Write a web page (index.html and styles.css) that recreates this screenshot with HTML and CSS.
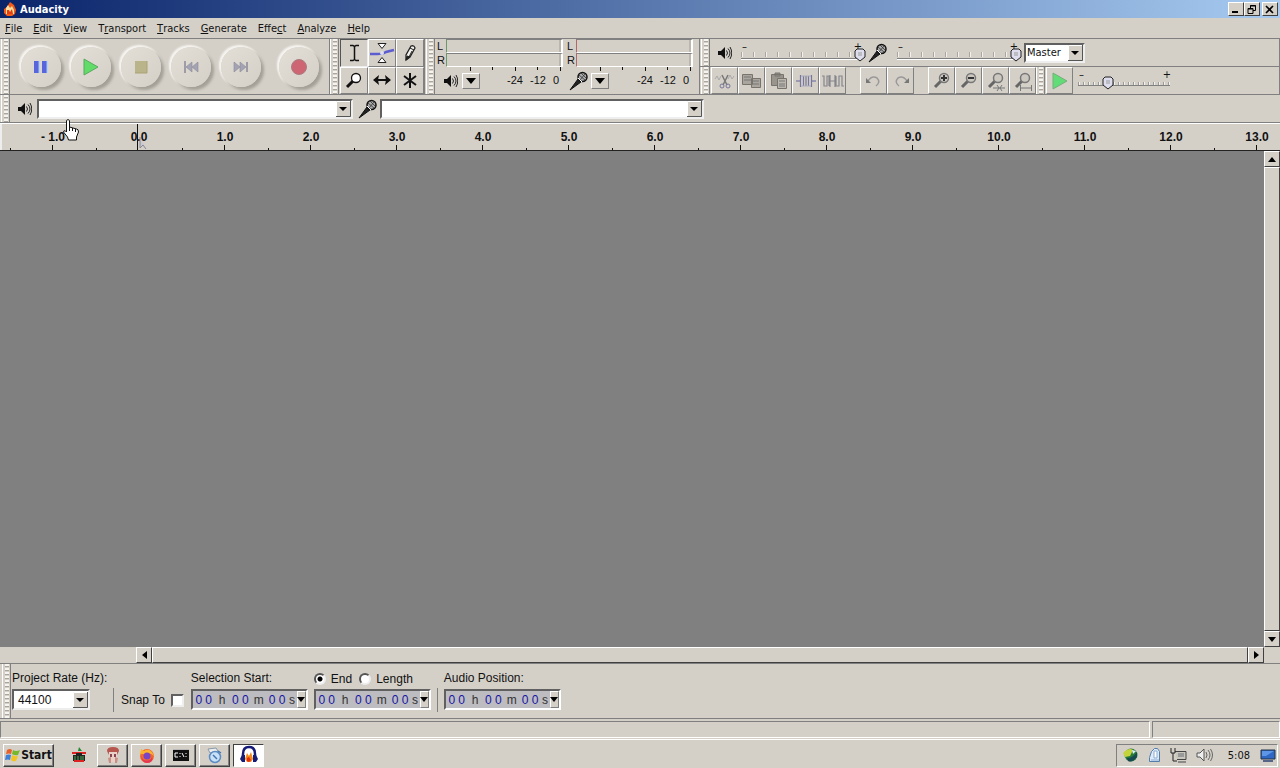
FILE: index.html
```html
<!DOCTYPE html>
<html lang="en">
<head>
<meta charset="utf-8">
<title>Audacity</title>
<link rel="stylesheet" href="styles.css">
</head>
<body>
<svg class="defs" aria-hidden="true">
  <symbol id="speaker" viewBox="0 0 14 14"><path d="M0 5h3l4-4v12L3 9H0z" fill="#111"/><path d="M8.500 4.500q2 2.500 0 5M10 2.500q4 4.500 0 9M12 1q3.500 6 0 12" fill="none" stroke="#222"/></symbol>
  <symbol id="mic" viewBox="0 0 20 20"><path d="M1 19L9 8l3 3z" fill="#222" stroke="#111"/><circle cx="13.500" cy="6" r="4.500" fill="#aaa" stroke="#111" stroke-width="1.500"/><path d="M10 4l6 5M12 2l5 5M11 9l5-6" stroke="#333" stroke-width=".8"/><path d="M9 7l4 4" stroke="#fff"/></symbol>
  <symbol id="lens" viewBox="0 0 20 20"><path d="M3 16l6-6" stroke="#666" stroke-width="3"/><circle cx="12" cy="7" r="4.500" fill="#ccc8c0" stroke="#777" stroke-width="1.500"/></symbol>
  <symbol id="down" viewBox="0 0 10 6"><path d="M0 0h10L5 6z" fill="#000"/></symbol>
</svg>

<header class="titlebar">
  <svg width="12" height="14" viewBox="0 0 12 14"><path d="M6 0l4 3 2 5-1 4-3 2H3l-3-3V7l3-2z" fill="#f25a18"/><path d="M2 6l2-3 2 3 2-2 2 4v4H2z" fill="#ffe0a0"/><path d="M3 8h2l1 2 2-3 1 5H3z" fill="#e33d10"/></svg>
  <h1>Audacity</h1>
  <div class="window-buttons">
    <button aria-label="Minimize"><svg width="10" height="9"><path d="M1 7h6" stroke="#000" stroke-width="2"/></svg></button>
    <button aria-label="Restore"><svg width="10" height="9"><path d="M3.500 3V.5h5v5H6M1 3.500h5v5H1zM3 1h6M1 4h5" fill="none" stroke="#000"/></svg></button>
    <button class="close" aria-label="Close"><svg width="10" height="9"><path d="M1 1l7 7M8 1L1 8" stroke="#000" stroke-width="1.600"/></svg></button>
  </div>
</header>

<nav class="menubar">
  <button><u>F</u>ile</button><button><u>E</u>dit</button><button><u>V</u>iew</button><button>T<u>r</u>ansport</button><button><u>T</u>racks</button><button><u>G</u>enerate</button><button>Effe<u>c</u>t</button><button><u>A</u>nalyze</button><button><u>H</u>elp</button>
</nav>

<section class="dock">
  <div class="dock-row">
    <div class="toolbar transport">
      <i class="grip"></i>
      <div class="round-buttons">
        <button aria-label="Pause"><svg width="16" height="16"><path d="M1 2h5v12H1zM9 2h5v12H9z" fill="#5865dc"/><path d="M6 2v12M14 2v12" stroke="#9cf"/></svg></button>
        <button aria-label="Play"><svg width="16" height="18"><path d="M1 1l14 8-14 8z" fill="#62dc68" stroke="#5aa860"/></svg></button>
        <button aria-label="Stop"><svg width="16" height="16"><path d="M2 2h12v12H2z" fill="#b9b48a"/><path d="M2 14h12V2" fill="none" stroke="#aaa374"/></svg></button>
        <button aria-label="Skip to start"><svg width="16" height="16"><path d="M2 2v12" stroke="#888898" stroke-width="1.500"/><path d="M9 3v10L3 8zM15 3v10L9 8z" fill="#a3a3b4" stroke="#8b8b9a" stroke-width=".6"/></svg></button>
        <button aria-label="Skip to end"><svg width="16" height="16"><path d="M14 3v10" stroke="#888898" stroke-width="1.500"/><path d="M1 3v10l6-5zM7 3v10l6-5z" fill="#a3a3b4" stroke="#8b8b9a" stroke-width=".6"/></svg></button>
        <button class="record" aria-label="Record"><svg width="18" height="18"><circle cx="9" cy="9" r="7.500" fill="#cd6672" stroke="#aa7c80"/></svg></button>
      </div>
    </div>
    <div class="toolbar tools">
      <i class="grip"></i>
      <div class="tool-grid">
        <button class="on" aria-label="Selection tool"><svg width="20" height="22"><path d="M6 3.500h3l1.500 1 1.500-1h3M6 18.500h3l1.500-1 1.500 1h3M10.500 4v14" fill="none" stroke="#111" stroke-width="1.500"/></svg></button>
        <button aria-label="Envelope tool"><svg width="26" height="24"><path d="M1 13h7q6 0 9-2l8-2" fill="none" stroke="#5d5dcf" stroke-width="2.500"/><path d="M9 2.500h8l-4 5zM9 21.500h8l-4-5z" fill="#fff" stroke="#222"/><circle cx="13" cy="12" r="2" fill="#dde"/></svg></button>
        <button aria-label="Draw tool"><svg width="20" height="22"><path d="M6 18v-5l5-9q3-1 4 2l-5 9z" fill="#f4f2ee" stroke="#222" stroke-width="1.300"/><path d="M6 18l1-4 3 1zM10 6l4 2M12 9l-3 6" stroke="#222" fill="#222"/></svg></button>
        <button aria-label="Zoom tool"><svg width="20" height="20"><path d="M3 17l6-6" stroke="#111" stroke-width="3"/><circle cx="12" cy="8" r="4.500" fill="#fff" stroke="#111" stroke-width="1.300"/></svg></button>
        <button aria-label="Time shift tool"><svg width="20" height="16"><path d="M3 8h14" stroke="#111" stroke-width="2"/><path d="M7 3L1 8l6 5-1-5zM13 3l6 5-6 5 1-5z" fill="#111"/></svg></button>
        <button aria-label="Multi tool"><svg width="18" height="18"><path d="M9 2v15M3 5l12 9M15 5L3 14" stroke="#111" stroke-width="2"/></svg></button>
      </div>
    </div>
    <div class="toolbar meters">
      <i class="grip"></i>
      <div class="meter out">
        <div class="bars"><span>L</span><i></i><span>R</span><i></i></div>
        <div class="scale-row"><svg width="14" height="14"><use href="#speaker"/></svg><button aria-label="Output meter menu"><svg width="10" height="6"><use href="#down"/></svg></button><span class="scale"><b>-24</b><b>-12</b><b>0</b></span></div>
      </div>
      <div class="meter in">
        <div class="bars"><span>L</span><i></i><span>R</span><i></i></div>
        <div class="scale-row"><svg width="20" height="20"><use href="#mic"/></svg><button aria-label="Input meter menu"><svg width="10" height="6"><use href="#down"/></svg></button><span class="scale"><b>-24</b><b>-12</b><b>0</b></span></div>
      </div>
    </div>
    <div class="stack">
      <div class="toolbar mixer">
        <i class="grip"></i>
        <svg class="speaker" width="14" height="14"><use href="#speaker"/></svg>
        <label class="slider"><span>–</span><span>+</span><input type="range" value="100" aria-label="Output volume"></label>
        <svg width="20" height="20"><use href="#mic"/></svg>
        <label class="slider"><span>–</span><span>+</span><input type="range" value="100" aria-label="Input volume"></label>
        <select class="combo source" aria-label="Input source"><option>Master</option></select>
      </div>
      <div class="toolbar edit">
        <i class="grip"></i>
        <button aria-label="Cut"><svg width="22" height="20"><path d="M8 4l5 10M14 4l-5 10" stroke="#777" stroke-width="1.500"/><circle cx="8" cy="15" r="2" fill="none" stroke="#779"/><circle cx="14" cy="15" r="2" fill="none" stroke="#779"/><path d="M1 8l2-3 2 4 2-4M14 8l2-4 2 4 2-3" fill="none" stroke="#aaa"/></svg></button>
        <button aria-label="Copy"><svg width="22" height="20"><path d="M1.500 3.500h10v10h-10zM10.500 7.500h9v9h-9z" fill="#aaa69e" stroke="#77746e"/><path d="M3 6h7M3 9h7M12 10h6M12 13h6" stroke="#777"/></svg></button>
        <button aria-label="Paste"><svg width="22" height="20"><path d="M3.500 3.500h12v11h-12zM7 2h5v3H7z" fill="#99958d" stroke="#77746e"/><path d="M9.500 7.500h9v10h-9z" fill="#bbb7ae" stroke="#77746e"/><path d="M11 10h6M11 13h6M11 15h6" stroke="#777"/></svg></button>
        <button aria-label="Trim"><svg width="22" height="20"><path d="M1 10h5M16 10h5" stroke="#88a" stroke-width="1.500"/><path d="M5.500 4v12M8.500 5v10M11 5v10M13.500 5v10M16.500 4v12" stroke="#77779d" stroke-width="1.200"/><path d="M6 5h10M6 15h10" stroke="#aab"/></svg></button>
        <button aria-label="Silence"><svg width="24" height="20"><path d="M1 5h2v10h3V5h2v10M8 10h7M15 5v10h3V5h3v10h2M9 4v12M14 4v12" fill="none" stroke="#85858c" stroke-width="1.200"/></svg></button>
        <i class="space"></i>
        <button aria-label="Undo"><svg width="20" height="18"><path d="M4 9q4-6 9-3 4 4-1 8" fill="none" stroke="#999" stroke-width="1.500"/><path d="M2 6v5h5z" fill="#777"/></svg></button>
        <button aria-label="Redo"><svg width="20" height="18"><path d="M16 9q-4-6-9-3-4 4 1 8" fill="none" stroke="#999" stroke-width="1.500"/><path d="M18 6v5h-5z" fill="#777"/></svg></button>
        <i class="space"></i>
        <button aria-label="Zoom in"><svg width="20" height="20"><use href="#lens"/><path d="M9 7h6M12 4v6" stroke="#333" stroke-width="2"/></svg></button>
        <button aria-label="Zoom out"><svg width="20" height="20"><use href="#lens"/><path d="M9 7h6" stroke="#333" stroke-width="2"/></svg></button>
        <button aria-label="Fit selection"><svg width="20" height="20"><use href="#lens"/><path d="M7 17h12M11 14l2 3-2 3M16 14l-2 3 2 3" fill="none" stroke="#777"/></svg></button>
        <button aria-label="Fit project"><svg width="20" height="20"><use href="#lens"/><path d="M7 17h12M7.500 14v6M18.500 14v6" stroke="#777"/></svg></button>
        <i class="grip"></i>
        <button aria-label="Play at speed"><svg width="18" height="18"><path d="M2 1l14 8-14 8z" fill="#62dc76" stroke="#76ad7c"/></svg></button>
        <label class="slider speed"><span>–</span><span>+</span><input type="range" value="30" aria-label="Playback speed"></label>
      </div>
    </div>
  </div>
  <div class="toolbar devices">
    <i class="grip"></i>
    <svg class="speaker" width="14" height="14"><use href="#speaker"/></svg>
    <select class="combo" aria-label="Output device"><option></option></select>
    <svg width="20" height="20"><use href="#mic"/></svg>
    <select class="combo second" aria-label="Input device"><option></option></select>
    <svg class="hand" width="17" height="24" viewBox="0 0 17 24"><path d="M4.500 14V2.500q1.500-2 3 0V9l7 2q2 0 2 3l-2 5v3h-8l-1-3-4-5q0-2 2-1z" fill="#fff" stroke="#111"/><path d="M7.500 8v5M10.500 10v3M13.500 11v3" stroke="#111"/></svg>
  </div>
</section>

<div class="ruler">
  <span>- 1.0</span><span class="zero">0.0<svg width="9" height="14"><path d="M1 1v11l3-3 3 4" fill="#c8c8d0" stroke="#88889a"/></svg></span><span>1.0</span><span>2.0</span><span>3.0</span><span>4.0</span><span>5.0</span><span>6.0</span><span>7.0</span><span>8.0</span><span>9.0</span><span>10.0</span><span>11.0</span><span>12.0</span><span>13.0</span>
</div>

<main class="workspace">
  <div class="tracks"></div>
  <div class="scroll vertical">
    <button aria-label="Scroll up"><svg width="8" height="5"><path d="M0 5h8L4 0z"/></svg></button>
    <i class="thumb"></i>
    <button aria-label="Scroll down"><svg width="8" height="5"><path d="M0 0h8L4 5z"/></svg></button>
  </div>
  <div class="scroll horizontal">
    <button aria-label="Scroll left"><svg width="5" height="8"><path d="M5 0v8L0 4z"/></svg></button>
    <i class="thumb"></i>
    <button aria-label="Scroll right"><svg width="5" height="8"><path d="M0 0v8l5-4z"/></svg></button>
  </div>
</main>

<section class="selection">
  <i class="grip"></i>
  <div class="field rate"><label for="rate">Project Rate (Hz):</label><select id="rate" class="combo"><option>44100</option></select></div>
  <div class="snap"><label for="snap">Snap To</label><input id="snap" type="checkbox"></div>
  <div class="field"><span>Selection Start:</span>
    <div class="time"><b>0</b><b>0</b><em>h</em><b>0</b><b>0</b><em>m</em><b>0</b><b>0</b><em class="s">s</em><button aria-label="Start format"><svg width="8" height="5" viewBox="0 0 10 6"><use href="#down"/></svg></button></div></div>
  <div class="field end"><div class="radios"><input type="radio" name="mode" id="end" checked><label for="end">End</label><input type="radio" name="mode" id="length"><label for="length">Length</label></div>
    <div class="time"><b>0</b><b>0</b><em>h</em><b>0</b><b>0</b><em>m</em><b>0</b><b>0</b><em class="s">s</em><button aria-label="End format"><svg width="8" height="5" viewBox="0 0 10 6"><use href="#down"/></svg></button></div></div>
  <i class="divider"></i>
  <div class="field"><span>Audio Position:</span>
    <div class="time"><b>0</b><b>0</b><em>h</em><b>0</b><b>0</b><em>m</em><b>0</b><b>0</b><em class="s">s</em><button aria-label="Position format"><svg width="8" height="5" viewBox="0 0 10 6"><use href="#down"/></svg></button></div></div>
</section>

<div class="status"><i></i><i></i></div>

<footer class="taskbar">
  <button class="start"><svg width="16" height="16"><path d="M2 3q3-2 5 0L6 7Q4 6 1 7z" fill="#e8602c"/><path d="M8 3q3 2 7 0l-2 5q-3 1-6-1z" fill="#76b82c"/><path d="M1 8q3-1 5 0l-1 5q-2-1-5 0z" fill="#3f7fd8"/><path d="M7 8q3 2 6 1l-2 5q-3 1-5-1z" fill="#f3c421"/></svg>Start</button>
  <a href="#" class="quick" aria-label="Quick launch"><svg width="16" height="16"><path d="M1 5h14v2H1z" fill="#d22"/><path d="M8 0l3 4H7z" fill="#283"/><path d="M2 8h3V6h6v2h3v6H2z" fill="#222"/><path d="M4 9v4M7 9v4M10 9v4M12 9v4" stroke="#4a5"/><path d="M3 14h10" stroke="#d22" stroke-width="2"/></svg></a>
  <button aria-label="Image viewer"><svg width="18" height="18"><path d="M3 5q0-4 6-4t6 4l-2 4H5z" fill="#b7564e"/><path d="M5 6h8v10H5z" fill="#e8d2c8"/><path d="M6 8h2v3H6zM10 8h2v3h-2z" fill="#8b4350"/><path d="M4 12l3-1v6H5zM14 12l-3-1v6h2z" fill="#c98f86"/></svg></button>
  <button aria-label="Firefox"><svg width="18" height="18"><circle cx="9" cy="10" r="7" fill="#f3682c"/><path d="M2 8l1-5 3 2q4-3 8 1l2 4q-4-4-8-2z" fill="#fdb42c"/><circle cx="9" cy="10" r="3.500" fill="#7a45c5"/><path d="M3 10q2 6 8 4 3-1 3-4 2 7-5 7-5 0-6-7" fill="#e33756"/></svg></button>
  <button aria-label="Command prompt"><svg width="16" height="14"><path d="M0 1h16v12H0z" fill="#111"/><path d="M0 1.500h16" stroke="#bbb"/><path d="M5 5H2v4h3M7 5v1M7 8v1M9 5l2 4M13 8v1M13 5v1" fill="none" stroke="#fff"/></svg></button>
  <button aria-label="Utility"><svg width="18" height="18"><path d="M2 3l8-1 2 3-8 2z" fill="#eee" stroke="#89a"/><circle cx="9" cy="11" r="5.500" fill="#c9e1f6" stroke="#5b8cc4" stroke-width="1.500"/><path d="M7 9l4 4M12 5l3 2" stroke="#4575b0" stroke-width="1.500"/></svg></button>
  <button class="active" aria-label="Audacity"><svg width="20" height="20"><path d="M4 15V9q0-7 6-7t6 7v6" fill="none" stroke="#151b77" stroke-width="2.500"/><path d="M3 10h3v7H3l-2-3zM14 10h3l2 4-2 3h-3z" fill="#151b77"/><path d="M6 14l2-6 2 3 2-4 2 7-2 3H8z" fill="#f28a1b"/><path d="M8 13l2-1 2 3-2 2-2-1z" fill="#e52c17"/></svg></button>
  <div class="tray">
    <svg width="18" height="16"><circle cx="9" cy="8" r="6.500" fill="#287a3b"/><path d="M1 6q6-6 10-3l-3 6-5 1z" fill="#c6d43c"/><path d="M5 11q6 0 10-6v5q-5 6-9 4z" fill="#164a50"/><path d="M10 3l4 1-3 3z" fill="#def"/></svg>
    <svg width="14" height="16"><path d="M3.500 4.500l3-3h3l2 3v10h-10v-4z" fill="#dceafa" stroke="#557daa"/><path d="M6 4h3v7H6zM3 13h8" fill="#fff" stroke="#8cacd0"/></svg>
    <svg width="18" height="16"><path d="M5 4.500h11v8H7M8 15h8" fill="#c9c6be" stroke="#444"/><path d="M8 6h6v4H8z" fill="#999"/><path d="M1 1v5h4V1M3 6v8h4" fill="none" stroke="#222"/></svg>
    <svg width="18" height="16"><path d="M1 6h3l4-4v12l-4-4H1z" fill="#eee" stroke="#555"/><path d="M10 5q2 3 0 6M12 3q4 5 0 10M14.500 2q4 6 0 12" fill="none" stroke="#666"/></svg>
    <time>5:08</time>
    <svg width="16" height="14"><path d="M1 2h14v9H1z" fill="#2f67c4" stroke="#234"/><path d="M2 3h12l-8 5H2z" fill="#5d96e6"/><path d="M3 12h10v2H3z" fill="#568"/></svg>
  </div>
</footer>
</body>
</html>
```

FILE: styles.css
```css
* { box-sizing: border-box; }
body {
  margin: 0; height: 100vh; display: flex; flex-direction: column; overflow: hidden;
  background: #d4d0c8; color: #111;
  font: 11px "DejaVu Sans Condensed", "DejaVu Sans", sans-serif;
}
button, select, input { font: inherit; color: inherit; margin: 0; padding: 0; }
button { background: #d4d0c8; border: 0; display: flex; align-items: center; justify-content: center; }
svg { display: block; flex: none; }
.defs { position: absolute; width: 0; height: 0; }

.titlebar { display: flex; align-items: center; gap: 4px; height: 18px; flex: none; padding: 0 2px 0 4px; background: linear-gradient(90deg, #0a246a, #a6caf0); color: #fff; }
.titlebar h1 { flex: 1; margin: 0; font-size: 11px; }
.window-buttons { display: flex; }
.window-buttons button { width: 16px; height: 14px; border: 1px solid; border-color: #fff #404040 #404040 #fff; }
.window-buttons .close { margin-left: 2px; }

.menubar { display: flex; height: 20px; flex: none; padding-left: 5px; gap: 11px; }
.menubar button { background: none; }

.dock { flex: none; border-top: 1px solid #808080; }
.dock-row { display: flex; height: 56px; }
.toolbar { display: flex; border-right: 1px solid #808080; border-bottom: 1px solid #808080; }
.grip { flex: none; width: 9px; margin-right: 1px; border-left: 1px solid #fff; border-right: 1px solid #808080; background: repeating-linear-gradient(#f6f4f0 0 2px, #aaa69e 2px 3px, #d4d0c8 3px 4px) 2px 0 / 4px 100% no-repeat; align-self: stretch; }

.transport { width: 330px; }
.transport .grip { margin-left: 1px; }
.round-buttons { display: flex; align-items: center; gap: 10px; padding-left: 10px; }
.round-buttons button { width: 40px; height: 40px; border-radius: 50%; background: linear-gradient(135deg, #e3dfd7, #d4d0c8); box-shadow: -2px -2px 2px #f6f4f0, 3px 3px 3px #a39f97, 0 0 0 2px #dfdbd3; }
.round-buttons .record { margin-left: 8px; }

.tools { width: 95px; }
.tool-grid { display: grid; flex: 1; grid-template-columns: repeat(3, 1fr); grid-template-rows: 1fr 1fr; }
.tool-grid button, .edit > button { border: 1px solid; border-color: #fff #808080 #808080 #fff; overflow: hidden; }
.tool-grid .on { border-color: #555 #eee #eee #555; }

.meters { width: 275px; gap: 4px; padding-left: 1px; }
.meters .grip { margin-right: -2px; }
.meter { width: 126px; font-family: "Liberation Sans", Arial, sans-serif; }
.bars { display: grid; grid-template-columns: 9px 1fr; height: 28px; line-height: 14px; }
.bars i { border: solid; border-width: 1px 2px 1px 1px; border-color: #808080 #fff #fff #6a9a6a; box-shadow: inset -2px 0 #bbb7af; }
.in .bars i { border-left-color: #b06a6a; }
.scale-row { display: flex; align-items: center; height: 27px; gap: 4px; padding-left: 7px; background: linear-gradient(#111, #111) 33px 0 / 1px 4px no-repeat, linear-gradient(#111, #111) 55px 0 / 1px 3px no-repeat, linear-gradient(#111, #111) 78px 0 / 1px 4px no-repeat, linear-gradient(#111, #111) 100px 0 / 1px 3px no-repeat, linear-gradient(#111, #111) 123px 0 / 1px 4px no-repeat; }
.in .scale-row { padding-left: 2px; gap: 2px; }
.scale-row button { width: 18px; height: 16px; border: 1px solid; border-color: #fff #808080 #808080 #fff; }
.scale { display: flex; flex: 1; justify-content: flex-end; gap: 7px; padding: 0 4px 2px 0; }
.scale b { font-weight: 400; }

.stack { flex: 1; display: flex; flex-direction: column; min-width: 0; }
.stack .toolbar { flex: 1; align-items: center; min-height: 0; padding-left: 1px; }
.mixer .speaker { margin: 0 9px 0 7px; }
.mixer .slider + svg { margin: 0 9px 0 2px; }
.slider { display: grid; grid-template-columns: 1fr auto; width: 125px; height: 26px; line-height: 14px; font-size: 11px; }
.slider span { grid-area: 1 / 1; padding: 0 1px; }
.slider span + span { grid-column: 2; padding-right: 4px; }
.slider input { grid-area: 1 / 1 / 2 / 3; appearance: none; width: 100%; height: 26px; background: linear-gradient(#808080, #808080) 0 18px / 119px 1px no-repeat, linear-gradient(#fff, #fff) 0 19px / 119px 1px no-repeat, repeating-linear-gradient(90deg, #aaa69e 0 1px, #f4f2ee 1px 2px, transparent 2px 12px) 0 12px / 119px 5px no-repeat; }
.slider input::-webkit-slider-thumb { appearance: none; width: 12px; height: 14px; margin-top: 4px; background: url("data:image/svg+xml,%3Csvg xmlns='http://www.w3.org/2000/svg' width='12' height='14'%3E%3Cpath d='M3 1h6l2 2v6l-5 4-5-4V3z' fill='%23dde' stroke='%23222'/%3E%3Cpath d='M4 5h4M4 7h4' stroke='%23999'/%3E%3C/svg%3E"); }
.slider.speed { width: 93px; margin-left: 5px; }
.slider.speed span + span { padding-right: 0; }
.slider.speed input { background: linear-gradient(#808080, #808080) 0 17px / 92px 1px no-repeat, repeating-linear-gradient(90deg, #999 0 1px, #f4f2ee 1px 2px, transparent 2px 5px) 0 14px / 92px 4px no-repeat; }
.source { width: 61px; height: 20px; margin-left: 2px; }
.edit > button { width: 27px; height: 27px; flex: none; }
.edit .space { width: 14px; }

.combo { appearance: none; border: 2px solid; border-color: #606060 #eee #eee #606060; padding-left: 1px; background: url("data:image/svg+xml,%3Csvg xmlns='http://www.w3.org/2000/svg' width='15' height='16'%3E%3Cpath fill='%23d4d0c8' d='M0 0h15v16H0z'/%3E%3Cpath d='M.5 15V.5H14' fill='none' stroke='%23fff'/%3E%3Cpath d='M0 15.500h14.500V0' fill='none' stroke='%23555'/%3E%3Cpath d='M3 6h8l-4 4z'/%3E%3C/svg%3E") right center no-repeat #fff; border-radius: 0; }
.devices { position: relative; align-items: center; height: 28px; border-right: 0; padding-left: 1px; }
.devices .speaker { margin: 0 5px 0 7px; }
.devices .combo { width: 316px; height: 20px; margin-right: 5px; }
.devices .second { width: 324px; margin-left: 2px; }
.hand { position: absolute; left: 62px; top: 23px; z-index: 2; }

.ruler { display: flex; flex: none; height: 28px; padding-left: 10px; border-top: 1px solid #fff; border-bottom: 1px solid #222; overflow: hidden; font: bold 12px/26px "Liberation Sans", Arial, sans-serif; text-align: center; box-shadow: inset 2px 0 #eee; }
.ruler span { flex: none; width: 86px; background: linear-gradient(#111, #111) 42px 100% / 1px 5px no-repeat, linear-gradient(#111, #111) 0 100% / 1px 2px no-repeat; }
.ruler .zero { position: relative; background: linear-gradient(#111, #111) 41px 0 / 1px 100% no-repeat, linear-gradient(#111, #111) 0 100% / 1px 2px no-repeat; }
.zero svg { position: absolute; left: 43px; top: 12px; }

.workspace { flex: 1; min-height: 0; display: grid; grid-template-columns: 1fr 16px; grid-template-rows: 1fr 16px; }
.tracks { background: #808080; }
.scroll { display: flex; background: #ece9e2; }
.scroll.vertical { flex-direction: column; }
.scroll.horizontal { margin-left: 136px; }
.scroll button, .thumb { border: 1px solid; border-color: #fff #404040 #404040 #fff; background: #d4d0c8; }
.scroll button { flex: none; width: 16px; height: 16px; }
.thumb { flex: 1; }

.selection { display: flex; flex: none; height: 56px; border-top: 1px solid #808080; border-bottom: 1px solid #808080; padding-left: 2px; font: 12px "Liberation Sans", Arial, sans-serif; }
.field { display: grid; grid-template-rows: 16px 21px; row-gap: 2px; padding-top: 7px; align-content: start; }
.rate { width: 101px; white-space: nowrap; }
.rate .combo { width: 78px; height: 21px; padding-left: 4px; }
.snap { display: flex; align-items: center; gap: 6px; height: 24px; margin: 24px 7px 0 0; padding-left: 7px; border-left: 1px solid #808080; }
.snap input { appearance: none; width: 13px; height: 13px; background: #fff; border: 2px solid; border-color: #606060 #eee #eee #606060; }
.time { display: flex; width: 117px; height: 21px; line-height: 18px; border: 2px solid; border-color: #606060 #fff #fff #606060; background: #bdbcc0; padding-left: 1px; text-align: center; }
.time b { width: 10px; font-weight: 400; color: #1515a5; }
.time em { width: 17px; font-style: normal; color: #333; }
.time .s { width: 10px; }
.time button { width: 9px; background: #d4d0c8; border: 1px solid; border-color: #fff #808080 #808080 #fff; }
.end { margin-left: 6px; }
.radios { display: flex; align-items: center; gap: 5px; }
.radios input { appearance: none; width: 12px; height: 12px; border: 2px solid; border-color: #555 #eee #eee #555; border-radius: 50%; background: #fff; }
.radios input:checked { background: radial-gradient(circle, #000 2px, #fff 3px); }
.radios label + input { margin-left: 2px; }
.divider { width: 1px; height: 24px; margin: 24px 6px 0; background: #808080; }

.status { display: flex; flex: none; height: 21px; gap: 2px; padding: 2px 0 1px; border-bottom: 1px solid #fff; }
.status i { border: 1px solid; border-color: #808080 #fff #fff #808080; width: 128px; }
.status i:first-child { flex: 1; }

.taskbar { display: flex; align-items: center; flex: none; height: 28px; padding: 2px 2px 0 3px; gap: 3px; }
.taskbar button { width: 31px; height: 23px; border: 1px solid; border-color: #fff #404040 #404040 #fff; box-shadow: inset -1px -1px #808080; }
.taskbar .start { width: 51px; font-weight: 700; font-size: 12px; }
.quick { display: flex; justify-content: center; width: 37px; padding-left: 6px; }
.taskbar .active { background: #fff; border-color: #404040 #fff #fff #404040; box-shadow: none; }
.tray { display: flex; align-items: center; gap: 8px; margin-left: auto; height: 23px; padding: 0 1px 0 5px; border: 1px solid; border-color: #808080 #fff #fff #808080; }
.tray time { margin: 0 2px 0 6px; }
```
